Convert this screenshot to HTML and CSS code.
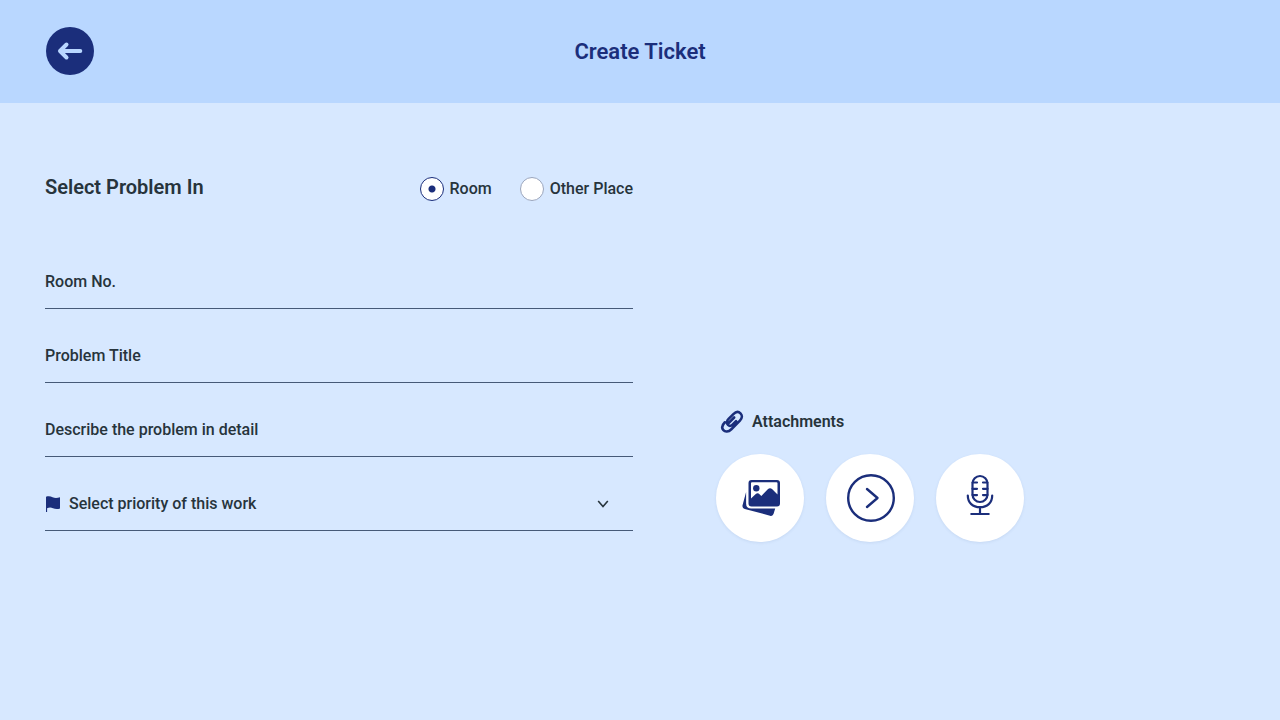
FILE: index.html
```html
<!DOCTYPE html>
<html lang="en">
<head>
<meta charset="utf-8">
<meta name="viewport" content="width=device-width, initial-scale=1">
<title>Create Ticket</title>
<link rel="stylesheet" href="styles.css">
</head>
<body>
<header class="topbar">
  <button class="back" type="button" aria-label="Back">
    <svg width="48" height="48" viewBox="0 0 48 48" fill="none" stroke="currentColor" stroke-width="4" stroke-linecap="round" stroke-linejoin="round"><path d="M34.300 24H14M20.500 17.500L14 24l6.500 6.500"/></svg>
  </button>
  <h1 class="title">Create Ticket</h1>
</header>
<main class="content">
  <form class="ticket">
    <div class="place" role="radiogroup" aria-labelledby="place-heading">
      <h2 class="place-heading" id="place-heading">Select Problem In</h2>
      <div class="choices">
        <label class="choice"><input class="radio" type="radio" name="place" checked>Room</label>
        <label class="choice"><input class="radio" type="radio" name="place">Other Place</label>
      </div>
    </div>
    <div class="field"><input class="control" type="text" aria-label="Room No." placeholder="Room No."></div>
    <div class="field"><input class="control" type="text" aria-label="Problem Title" placeholder="Problem Title"></div>
    <div class="field"><input class="control" type="text" aria-label="Describe the problem in detail" placeholder="Describe the problem in detail"></div>
    <div class="field">
      <svg class="flag" width="16" height="16" viewBox="0 0 16 16" fill="currentColor"><path d="M1 .8C3.800 -.1 5.600 .4 7.600 1.300S12.200 2.200 15 1.300V12.500C12.400 13.400 10 13.100 8 12.200S4.200 11.300 2.100 12.200V16H1z"/></svg>
      <select class="control" aria-label="Select priority of this work">
        <option>Select priority of this work</option>
        <option>Low</option>
        <option>Medium</option>
        <option>High</option>
      </select>
      <svg class="chevron" width="12" height="12" viewBox="0 0 12 12" fill="none" stroke="currentColor" stroke-width="1.6"><path d="M1.200 3L6 8.600 10.800 3"/></svg>
    </div>
  </form>
  <section class="attachments">
    <h2 class="attachments-heading">
      <svg width="24" height="24" viewBox="-1 -1 26 26" fill="none" stroke="currentColor" stroke-width="2.800" stroke-linecap="round" stroke-linejoin="round"><path d="M7.800 13.600L14.300 7.100M4.300 12.300C.8 15.800.9 18.900 2.700 20.900S8 23 11.300 19.800L20.600 10.500C23.300 7.800 23.200 4.700 21.200 2.700S16.200.8 13.500 3.500L8.300 8.700C6.200 10.800 6 13.600 7.600 15.200S11.200 16.200 12.600 14.800L16.400 11"/></svg>
      Attachments
    </h2>
    <div class="actions">
      <button class="action" type="button" aria-label="Add image">
        <svg width="88" height="88" viewBox="0 0 88 88" fill="currentColor"><path fill-rule="evenodd" d="M35.500 26H61Q64 26 64 29V49.500Q64 52.500 61 52.500H35.500Q32.500 52.500 32.500 49.500V29Q32.500 26 35.500 26ZM36 28.300Q35 28.300 35 29.300V44.500L39.500 40.300Q41.700 38.300 43.500 40.300L45.300 42 51.800 35.300Q54 33.100 56.300 35.300L61.500 40.500V29.300Q61.500 28.300 60.500 28.300Z"/><circle cx="40.300" cy="34.300" r="3.200"/><path d="M30.100 38V49.500Q30.100 54.600 35.200 54.600H59.200L57.600 59.800Q56.800 62.500 54 61.700L28.800 55Q25.800 54.100 26.600 51.100Z"/></svg>
      </button>
      <button class="action" type="button" aria-label="Add video">
        <svg width="88" height="88" viewBox="0 0 88 88" fill="none" stroke="currentColor" stroke-width="2.400" stroke-linecap="round" stroke-linejoin="round"><circle cx="45" cy="44" r="22.800"/><path d="M41 35L51.500 44 41 53"/></svg>
      </button>
      <button class="action" type="button" aria-label="Record audio">
        <svg width="88" height="88" viewBox="0 0 88 88" fill="none" stroke="currentColor" stroke-width="2.200" stroke-linecap="round"><rect x="36.500" y="22" width="15" height="26" rx="7.500"/><path d="M31.800 41.500C31.800 48.800 36.800 53.200 44 53.200S56.200 48.800 56.200 41.500M44 53.200V60M35.300 60H52.700M36.500 28.500H41M36.500 34.800H41M36.500 41.100H41M51.500 28.500H47M51.500 34.800H47M51.500 41.100H47"/></svg>
      </button>
    </div>
  </section>
</main>
</body>
</html>
```
FILE: styles.css
```css
:root {
  --navy: #1b2e7b;
  --ink: #27343c;
  --line: #465a78;
}

* {
  box-sizing: border-box;
}

body {
  margin: 0;
  min-height: 100vh;
  background: #d7e8ff;
  color: var(--ink);
  font: 500 16px/24px Roboto, sans-serif;
}

svg {
  display: block;
  flex: none;
}

.topbar {
  display: grid;
  grid-template-columns: 48px 1fr 48px;
  align-items: center;
  padding: 27px 46px 28px;
  background: #b9d7ff;
  color: var(--navy);
}

.back {
  width: 48px;
  height: 48px;
  padding: 0;
  border: 0;
  border-radius: 50%;
  background: var(--navy);
  color: #b9d7ff;
  cursor: pointer;
}

.title {
  margin: 0;
  padding-top: 2px;
  font-size: 22px;
  font-weight: 600;
  text-align: center;
}

.content {
  display: grid;
  grid-template-columns: 7fr 6fr;
  column-gap: 83px;
  padding: 72px 60px 40px 45px;
}

.ticket {
  display: flex;
  flex-direction: column;
  gap: 24px;
}

.place {
  display: flex;
  align-items: flex-start;
  justify-content: space-between;
  margin-bottom: 34px;
}

.place-heading {
  margin: 0;
  font-size: 20px;
  font-weight: 600;
}

.choices {
  display: flex;
  gap: 28px;
  padding-top: 2px;
}

.choice {
  display: flex;
  align-items: center;
  gap: 6px;
}

.radio {
  appearance: none;
  width: 24px;
  height: 24px;
  margin: 0;
  border: 1px solid #9aa5bd;
  border-radius: 50%;
  background: #fff;
}

.radio:checked {
  border-color: var(--navy);
  background: radial-gradient(circle, var(--navy) 3px, #fff 4px);
}

.field {
  display: flex;
  align-items: center;
  height: 50px;
  padding-bottom: 4px;
  border-bottom: 1px solid var(--line);
}

.control {
  appearance: none;
  flex: 1;
  min-width: 0;
  height: 100%;
  padding: 0;
  border: 0;
  outline: 0;
  background: transparent;
  color: var(--ink);
  font: inherit;
}

.control::placeholder {
  color: var(--ink);
  opacity: 1;
}

.flag {
  margin-right: 8px;
  color: var(--navy);
}

.chevron {
  margin-right: 24px;
}

.attachments {
  padding-top: 235px;
}

.attachments-heading {
  display: flex;
  align-items: center;
  gap: 8px;
  margin: 0 0 20px;
  padding-left: 4px;
  font-size: 16px;
  font-weight: 600;
}

.attachments-heading svg,
.action {
  color: var(--navy);
}

.actions {
  display: flex;
  gap: 22px;
}

.action {
  width: 88px;
  height: 88px;
  padding: 0;
  border: 0;
  border-radius: 50%;
  background: #fff;
  box-shadow: 0 1px 3px rgba(70, 110, 160, 0.12);
  cursor: pointer;
}
```
